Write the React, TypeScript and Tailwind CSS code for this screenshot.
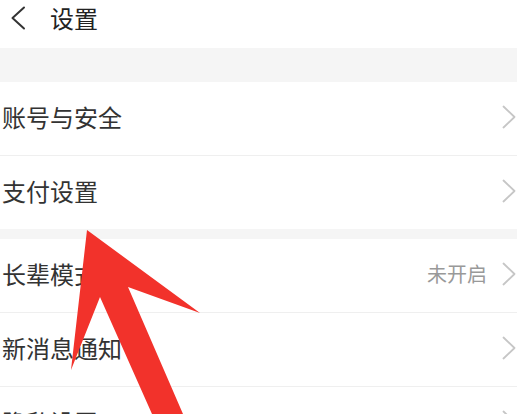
import React from "react";

const Chevron = () => (
  <svg width="14" height="24" viewBox="0 0 14 24" className="shrink-0">
    <polyline points="1.5,1.5 12.5,12 1.5,22.5" fill="none" stroke="#c6c6c6" strokeWidth="1.8" strokeLinecap="round" strokeLinejoin="round" />
  </svg>
);

const Row = ({ label, value }: { label: string; value?: string }) => (
  <div className="h-[73px] flex items-center justify-between pl-[2px] pr-[1px] pb-[3px] bg-white">
    <span className="text-[24px] leading-none text-[#333]">{label}</span>
    <div className="flex items-center gap-[15px]">
      {value && <span className="text-[20px] leading-none text-[#999]">{value}</span>}
      <Chevron />
    </div>
  </div>
);

const Divider = () => <div className="h-[1px] bg-[#efefef]" />;

export default function App() {
  return (
    <div
      className="relative w-[517px] h-[414px] overflow-hidden bg-white"
      style={{ fontFamily: '"Noto Sans CJK SC", "Noto Sans", sans-serif' }}
    >
      <div className="h-[48px] flex items-center pb-[12px]">
        <svg width="16" height="24" viewBox="0 0 16 24" className="ml-[10px]">
          <polyline points="14,1.5 2.5,12 14,22.5" fill="none" stroke="#333" strokeWidth="2" strokeLinecap="round" strokeLinejoin="round" />
        </svg>
        <span className="ml-[24px] text-[24px] leading-none text-[#222]">设置</span>
      </div>
      <div className="h-[34px] bg-[#f5f5f5]" />
      <Row label="账号与安全" />
      <Divider />
      <Row label="支付设置" />
      <div className="h-[10px] bg-[#f5f5f5]" />
      <Row label="长辈模式" value="未开启" />
      <Divider />
      <Row label="新消息通知" />
      <Divider />
      <Row label="隐私设置" />

      <svg className="absolute inset-0 pointer-events-none" width="517" height="414" viewBox="0 0 517 414">
        <polygon
          points="87,230 200,313 128,287 183,414 152,414 100,297 71,370"
          fill="#f2322b"
        />
      </svg>
    </div>
  );
}
